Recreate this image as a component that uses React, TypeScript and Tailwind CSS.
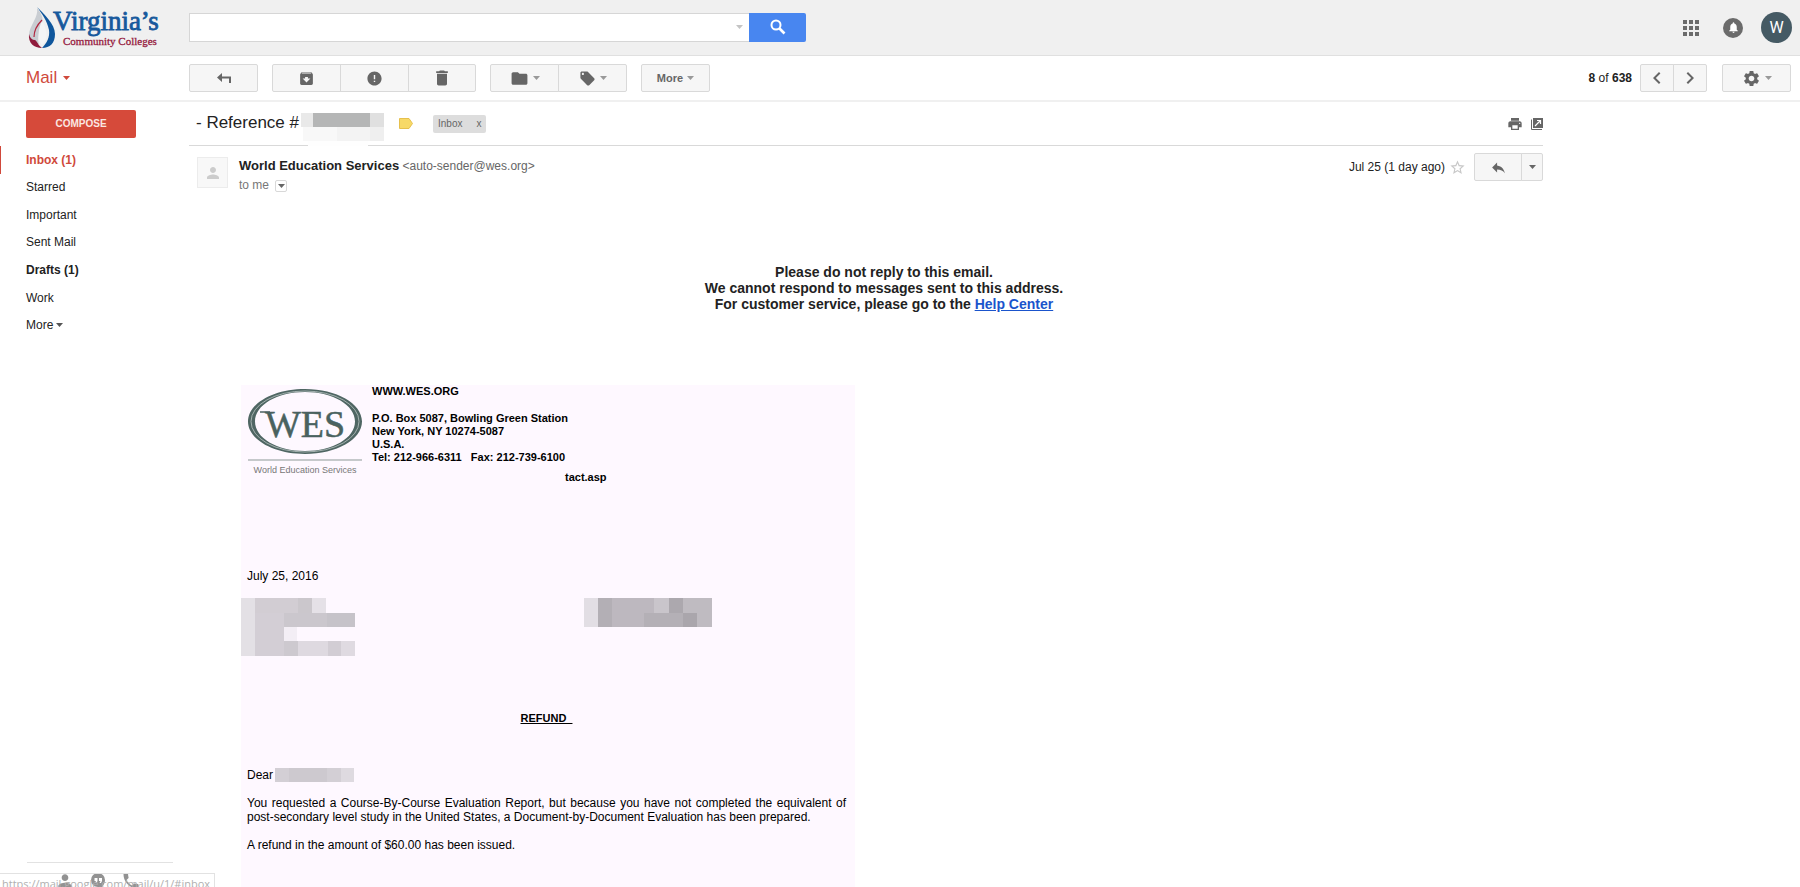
import React from "react";
import {
  MdApps,
  MdArchive,
  MdChevronLeft,
  MdChevronRight,
  MdDelete,
  MdError,
  MdFolder,
  MdLocalOffer,
  MdNotifications,
  MdPerson,
  MdPhone,
  MdPrint,
  MdReply,
  MdSearch,
  MdSettings,
  MdStarBorder,
} from "react-icons/md";

const navItems = [
  { label: "Inbox (1)", style: "font-bold text-[#d0493b]" },
  { label: "Starred" },
  { label: "Important" },
  { label: "Sent Mail" },
  { label: "Drafts (1)", style: "font-bold" },
  { label: "Work" },
];

// [x, y, width, height, fill]
type Cell = [number, number, number, number, string];

const subjectCells: Cell[] = [
  [7, 28, 60, 5, "#fefefe"],
  [0, 0, 12, 14, "#e9e9e9"],
  [12, 0, 57, 14, "#b5b6b6"],
  [69, 0, 14, 14, "#e0e0e0"],
  [2, 14, 34, 14, "#f8f8f8"],
  [36, 14, 33, 14, "#f3f3f3"],
  [69, 14, 14, 14, "#efefef"],
];

const addressCells: Cell[] = [
  [0, 0, 14, 58, "#e3e0e5"],
  [14, 0, 57, 15, "#d2cdd3"],
  [57, 0, 14, 15, "#cbc7cc"],
  [71, 0, 14, 15, "#e5e1e7"],
  [14, 15, 29, 43, "#d3ced5"],
  [43, 15, 43, 14, "#cbc7cd"],
  [86, 15, 28, 14, "#c6c3c9"],
  [43, 29, 13, 14, "#f3eef5"],
  [43, 43, 14, 15, "#cdc9cf"],
  [57, 43, 30, 15, "#ded9e0"],
  [87, 43, 13, 15, "#d2cdd4"],
  [100, 43, 14, 15, "#dfdae1"],
];

const fileCells: Cell[] = [
  [0, 0, 14, 29, "#e2dee4"],
  [14, 0, 14, 29, "#b3afb5"],
  [28, 0, 42, 29, "#bdb8bf"],
  [70, 0, 15, 15, "#c9c5cb"],
  [85, 0, 14, 15, "#aca8ae"],
  [99, 0, 29, 29, "#bfbbc1"],
  [60, 15, 39, 14, "#b4b0b6"],
  [99, 15, 14, 14, "#aaa6ac"],
];

const nameCells: Cell[] = [
  [0, 0, 66, 14, "#d3cfd5"],
  [14, 0, 38, 14, "#cdc9cf"],
  [66, 0, 13, 14, "#dedae0"],
];

function Redacted({
  cells,
  width,
  height,
  className = "",
}: {
  cells: Cell[];
  width: number;
  height: number;
  className?: string;
}) {
  return (
    <svg
      width={width}
      height={height}
      aria-hidden="true"
      shapeRendering="crispEdges"
      className={`shrink-0 ${className}`}
    >
      {cells.map(([x, y, w, h, fill], i) => (
        <rect key={i} x={x} y={y} width={w} height={h} fill={fill} />
      ))}
    </svg>
  );
}

function Caret({ className = "" }: { className?: string }) {
  return (
    <svg width="7" height="4" viewBox="0 0 7 4" className={`shrink-0 ${className}`} aria-hidden="true">
      <path d="M0 0h7L3.5 4z" fill="currentColor" />
    </svg>
  );
}

function ToolButton({
  label,
  className = "w-[69px] rounded-xs",
  children,
}: {
  label: string;
  className?: string;
  children: React.ReactNode;
}) {
  return (
    <button
      aria-label={label}
      className={`flex h-7 items-center justify-center border border-[#d9d9d9] bg-[#f6f6f6] text-[#666] ${className}`}
    >
      {children}
    </button>
  );
}

function CollegeLogo() {
  return (
    <svg width="136" height="46" viewBox="0 0 136 46" role="img" aria-label="Virginia's Community Colleges">
      <path d="M9 2c7 7 18 17 18 27 0 9-5 14-13 14 5-5 8-11 7-18C19 15 14 9 9 2z" fill="#0f569c" />
      <path d="M9 3c2 9-8 18-8 27 1 6 5 9 10 9-2-6 0-12 3-19C16 13 13 8 9 3z" fill="#c9cdd2" />
      <path d="M1 29c-1 9 5 14 13 14-4-3-5-7-7-8-3 0-5-2-6-6z" fill="#8f1b3c" />
      <path d="M14 16c-4 8-5 18 0 24 6-6 6-14 0-24z" fill="#f4f5f6" />
      <path d="M14 15c-5 5-8 10-8 17" fill="none" stroke="#b0273f" strokeWidth="1.2" />
      <text
        x="25"
        y="25"
        fill="#17599c"
        stroke="#17599c"
        strokeWidth="0.8"
        fontSize="27"
        fontFamily="'Liberation Serif', serif"
      >
        Virginia’s
      </text>
      <text
        x="35"
        y="40"
        fill="#96203f"
        stroke="#96203f"
        strokeWidth="0.3"
        fontSize="11"
        fontFamily="'Liberation Serif', serif"
      >
        Community Colleges
      </text>
    </svg>
  );
}

function WesLogo() {
  return (
    <svg width="114" height="88" viewBox="0 0 114 88" role="img" aria-label="World Education Services">
      <path
        fillRule="evenodd"
        fill="#4f6663"
        d="M57 0C88.500 0 114 14.500 114 32.500S88.500 65 57 65 0 50.500 0 32.500 25.500 0 57 0zM57 3C29 3 7 16 7 32.500S29 62 57 62s50-13 50-29.500S85 3 57 3z"
      />
      <ellipse cx="57" cy="32.500" rx="54" ry="30.500" fill="none" stroke="#b9c4c2" strokeWidth="0.8" />
      <path d="M12 23h10" stroke="#4a625f" strokeWidth="1.500" />
      <text
        x="17"
        y="48"
        fill="#4a625f"
        stroke="#4a625f"
        strokeWidth="0.5"
        fontSize="38"
        fontFamily="'Liberation Serif', serif"
      >
        WES
      </text>
      <path d="M0 71h114" stroke="#8d9997" strokeWidth="1" />
      <text x="57" y="84" textAnchor="middle" fill="#777" fontSize="9" fontFamily="'Liberation Sans', sans-serif">
        World Education Services
      </text>
    </svg>
  );
}

function Header() {
  return (
    <header className="flex h-14 shrink-0 items-center border-b border-[#e0e0e0] bg-[#f0f0f0] pr-2">
      <a href="#home" className="w-[189px] shrink-0 pl-7">
        <CollegeLogo />
      </a>
      <form className="mb-px flex h-[29px] w-[617px]">
        <div className="flex flex-1 items-center border border-r-0 border-[#d6d6d6] bg-white pr-1.5">
          <input aria-label="Search mail" className="h-full w-full px-2 text-sm outline-none" />
          <Caret className="text-[#c4c4c4]" />
        </div>
        <button
          type="button"
          aria-label="Search"
          className="flex w-[57px] items-center justify-center rounded-r-xs bg-[#4886f0] text-white"
        >
          <svg width="16" height="16" viewBox="0 0 16 16" aria-hidden="true">
            <circle cx="6" cy="6" r="4.500" fill="none" stroke="currentColor" strokeWidth="2" />
            <path d="M9.500 9.500l5 5" stroke="currentColor" strokeWidth="2.600" />
          </svg>
        </button>
      </form>
      <div className="ml-auto flex items-center">
        <button aria-label="Apps" className="mr-5 text-[#6b6b6b]">
          <MdApps size={24} />
        </button>
        <button
          aria-label="Notifications"
          className="mr-[18px] flex size-5 items-center justify-center rounded-full bg-[#6b6b6b] text-white"
        >
          <MdNotifications size={13} />
        </button>
        <button
          aria-label="Account"
          className="flex size-[31px] items-center justify-center rounded-full bg-[#455a64] font-[Roboto,sans-serif] text-base text-white"
        >
          W
        </button>
      </div>
    </header>
  );
}

function Toolbar() {
  return (
    <div className="flex h-[46px] shrink-0 items-center border-b-2 border-[#f0f0f0] pr-[9px]">
      <button className="flex w-[189px] shrink-0 items-center gap-1.5 pl-[26px] text-[17px] text-[#d0493b]">
        Mail
        <Caret />
      </button>
      <div className="flex gap-[14px]">
        <ToolButton label="Back to inbox">
          <svg width="14" height="11" viewBox="0 0 14 11" aria-hidden="true">
            <path d="M0 4.500L5 0v3.500h9V10h-2V5.500H5V9z" fill="currentColor" />
          </svg>
        </ToolButton>
        <div className="flex">
          <ToolButton label="Archive" className="w-[69px] rounded-l-xs">
            <MdArchive size={17} />
          </ToolButton>
          <ToolButton label="Report spam" className="-ml-px w-[69px]">
            <MdError size={17} />
          </ToolButton>
          <ToolButton label="Delete" className="-ml-px w-[68px] rounded-r-xs">
            <MdDelete size={20} />
          </ToolButton>
        </div>
        <div className="flex">
          <ToolButton label="Move to" className="w-[69px] gap-1 rounded-l-xs">
            <MdFolder size={19} />
            <Caret className="text-[#999]" />
          </ToolButton>
          <ToolButton label="Labels" className="-ml-px w-[69px] gap-1 rounded-r-xs">
            <MdLocalOffer size={17} />
            <Caret className="text-[#999]" />
          </ToolButton>
        </div>
        <ToolButton label="More" className="w-[69px] gap-1 rounded-xs text-[11px] font-bold">
          More
          <Caret className="text-[#999]" />
        </ToolButton>
      </div>
      <div className="ml-auto flex items-center">
        <p className="mr-2 text-xs">
          <b>8</b> of <b>638</b>
        </p>
        <ToolButton label="Newer" className="w-[34px] rounded-l-xs">
          <MdChevronLeft size={24} />
        </ToolButton>
        <ToolButton label="Older" className="-ml-px w-[34px] rounded-r-xs">
          <MdChevronRight size={24} />
        </ToolButton>
        <ToolButton label="Settings" className="ml-[15px] w-[69px] gap-1 rounded-xs">
          <MdSettings size={19} />
          <Caret className="text-[#999]" />
        </ToolButton>
      </div>
    </div>
  );
}

function Sidebar() {
  return (
    <aside className="flex w-[189px] shrink-0 flex-col pt-2">
      <button className="ml-[26px] h-7 w-[110px] rounded-xs bg-[#d64a3a] text-[10px] font-bold text-[#fbe6e2]">
        COMPOSE
      </button>
      <nav className="mt-2 grid h-[193px] auto-rows-fr text-xs">
        {navItems.map((item, i) => (
          <a
            key={item.label}
            href={`#${item.label}`}
            className={`flex items-center border-l pl-[25px] ${
              i === 0 ? "border-[#d0493b]" : "border-transparent"
            } ${item.style ?? ""}`}
          >
            {item.label}
          </a>
        ))}
        <button className="flex items-center gap-[3px] pl-[26px]">
          More
          <Caret className="text-[#555]" />
        </button>
      </nav>
      <div className="mt-auto mr-4 ml-[27px] flex h-[25px] shrink-0 items-start gap-4 border-t border-[#e2e2e2] pt-2 pl-7 text-[#777]">
        <MdPerson size={20} className="shrink-0" />
        <svg width="14" height="17" viewBox="0 0 14 17" className="mt-0.5 shrink-0" aria-label="Hangouts">
          <path
            fillRule="evenodd"
            fill="currentColor"
            d="M7 0a7 7 0 0 1 7 7c0 4-3 8-7 10v-3A7 7 0 0 1 7 0zM3.500 5v3h1.500l-1 2h1.500l1-2V5zm4.500 0v3h1.500l-1 2H10l1-2V5z"
          />
        </svg>
        <MdPhone size={20} className="shrink-0" />
      </div>
    </aside>
  );
}

function MessageHeader() {
  return (
    <div className="flex pt-[7px] pl-2">
      <div className="mt-1 flex size-[31px] shrink-0 items-center justify-center border border-[#ececec] bg-[#f8f8f8] text-[#ccc]">
        <MdPerson size={18} />
      </div>
      <div className="mt-[3px] ml-[11px] leading-[19px]">
        <p className="text-[#666]">
          <b className="text-[13px] text-[#222]">World Education Services</b> &lt;auto-sender@wes.org&gt;
        </p>
        <p className="flex items-center gap-1.5 text-[#777]">
          to me
          <button
            aria-label="Show details"
            className="flex size-3 items-center justify-center rounded-xs border border-[#d8d8d8] text-[#666]"
          >
            <Caret />
          </button>
        </p>
      </div>
      <div className="ml-auto flex h-7 items-center">
        <span>Jul 25 (1 day ago)</span>
        <button aria-label="Star" className="mx-1 text-[#c8c8c8]">
          <MdStarBorder size={17} />
        </button>
        <ToolButton label="Reply" className="ml-1 w-12 rounded-l-xs">
          <MdReply size={17} />
        </ToolButton>
        <ToolButton label="More actions" className="-ml-px w-[22px] rounded-r-xs">
          <Caret />
        </ToolButton>
      </div>
    </div>
  );
}

function Letter() {
  return (
    <article className="flex-1 bg-[#fef8ff] pr-[9px] pl-[6px] text-xs leading-[14px] text-black">
      <div className="flex items-start gap-[10px] pt-1 pl-px">
        <WesLogo />
        <address className="-mt-1 text-[11px] leading-[13px] font-bold not-italic">
          <p>WWW.WES.ORG</p>
          <p className="mt-[14px] whitespace-pre-line">
            {"P.O. Box 5087, Bowling Green Station\nNew York, NY 10274-5087\nU.S.A.\nTel: 212-966-6311 \u00a0 Fax: 212-739-6100"}
          </p>
          <p className="mt-[7px] pl-[193px]">tact.asp</p>
        </address>
      </div>
      <p className="mt-[85px]">July 25, 2016</p>
      <div className="mt-[15px] -ml-[6px] flex pr-[134px]">
        <Redacted cells={addressCells} width={114} height={58} />
        <Redacted cells={fileCells} width={128} height={29} className="ml-auto" />
      </div>
      <h2 className="mt-[55px] text-center text-[11px] leading-[14px] font-bold">
        <u className="whitespace-pre">{"REFUND  "}</u>
      </h2>
      <p className="mt-[43px] flex items-center gap-0.5">
        Dear
        <Redacted cells={nameCells} width={79} height={14} />
      </p>
      <p className="mt-[14px] text-justify">
        You requested a Course-By-Course Evaluation Report, but because you have not completed the
        equivalent of post-secondary level study in the United States, a Document-by-Document
        Evaluation has been prepared.
      </p>
      <p className="mt-[14px]">A refund in the amount of $60.00 has been issued.</p>
    </article>
  );
}

export default function App() {
  return (
    <div className="relative flex h-screen flex-col overflow-hidden bg-white font-['Liberation_Sans',Arial,sans-serif] text-xs text-[#222]">
      <Header />
      <Toolbar />
      <div className="flex min-h-0 flex-1">
        <Sidebar />
        <main className="mr-[257px] flex min-w-0 flex-1 flex-col">
          {/* Subject */}
          <div className="flex h-11 shrink-0 items-center border-b border-[#d9d9d9] pl-[7px]">
            <h1 className="text-[17px]">- Reference #</h1>
            <Redacted cells={subjectCells} width={84} height={33} className="-mb-px ml-0.5 self-end" />
            <svg width="14" height="11" viewBox="0 0 14 11" className="ml-[14px]" aria-label="Important">
              <path d="M.500.500h9.500L13.500 5.500 10 10.500H.500z" fill="#f7d967" stroke="#e6c04d" />
            </svg>
            <span className="ml-5 flex h-[18px] items-center gap-[14px] rounded-xs bg-[#ddd] px-[5px] text-[10px] text-[#666]">
              Inbox
              <button aria-label="Remove label">x</button>
            </span>
            <div className="ml-auto flex items-center gap-2 text-[#666]">
              <button aria-label="Print">
                <MdPrint size={16} />
              </button>
              <button aria-label="Open in new window">
                <svg width="12" height="12" viewBox="0 0 12 12" aria-hidden="true">
                  <path d="M.500 1.500v10H11" fill="none" stroke="currentColor" />
                  <path d="M2 0h10v10H2z" fill="currentColor" />
                  <path d="M4 8l5.500-5.500M6 2.500h3.500V6" fill="none" stroke="#fff" strokeWidth="1.200" />
                </svg>
              </button>
            </div>
          </div>
          <MessageHeader />
          <div className="flex flex-1 flex-col pr-4 pl-[52px]">
            <p className="mt-[69px] text-center text-sm leading-4 font-bold">
              Please do not reply to this email.
              <br />
              We cannot respond to messages sent to this address.
              <br />
              For customer service, please go to the{" "}
              <a href="#help" className="text-[#1a54cc] underline">
                Help Center
              </a>
            </p>
            <div className="mt-[73px] flex w-full max-w-[614px] flex-1 flex-col">
              <Letter />
            </div>
          </div>
        </main>
      </div>
      {/* Browser link preview */}
      <div className="absolute bottom-0 left-0 h-[14px] border-t border-r border-[#e2e2e2] bg-white/20 pr-1 pl-0.5 font-['Open_Sans',sans-serif] text-[11px] leading-5 text-[#b0b0b0]">
        https://mail.google.com/mail/u/1/#inbox
      </div>
    </div>
  );
}
